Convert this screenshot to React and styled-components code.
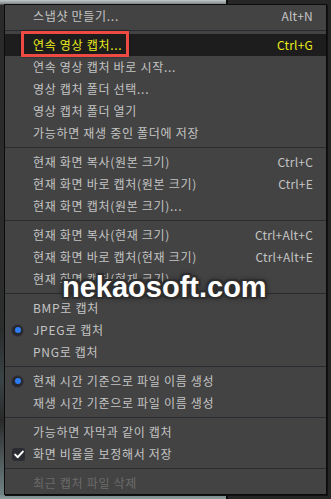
import React from "react";
import styled, { createGlobalStyle } from "styled-components";

const GlobalStyle = createGlobalStyle`
  html, body {
    margin: 0;
    padding: 0;
    width: 331px;
    height: 499px;
    overflow: hidden;
    background: #222;
  }
  body {
    font-family: "Noto Sans CJK KR", "Noto Sans", sans-serif;
  }
`;

const Desktop = styled.div`
  position: relative;
  display: grid;
  grid-template-columns: 226px 2px 1fr;
  width: 331px;
  height: 499px;
`;

const VideoPane = styled.div`
  background: linear-gradient(
    to bottom,
    #c3c9cb 0px,
    #7d8689 4px,
    #2a2a2a 5px,
    #2c2d2d 330px,
    #3a4446 380px,
    #2a2a2a 420px,
    #6f8283 494px,
    #8fa0a0 499px
  );
`;

const PaneDivider = styled.div`
  background: #0c0c0c;
`;

const SidePane = styled.div`
  background: #262626;
`;

const Menu = styled.div`
  position: absolute;
  left: 4px;
  top: 4px;
  width: 321px;
  border: 1px solid #0b0b0b;
  background: #434343;
  box-shadow: 1px 1px 0 #111;
  font-size: 12px;
  color: #c4c4c4;
`;

const Row = styled.div`
  display: grid;
  grid-template-columns: 24px 1fr auto;
  column-gap: 4px;
  align-items: center;
  height: 22px;
  line-height: 22px;
  padding-right: 13px;
  white-space: nowrap;
  background: ${(p) => (p.$highlight ? "#1d1d1d" : "transparent")};
  color: ${(p) => (p.$highlight ? "#ecec1a" : p.$disabled ? "#6b6b6b" : "#c4c4c4")};
`;

const Mark = styled.div`
  display: flex;
  align-items: center;
  justify-content: center;
  padding-left: 1px;
`;

const Label = styled.span`
  letter-spacing: 0.7px;
`;

const Shortcut = styled.span`
  text-align: right;
  letter-spacing: 0.2px;
`;

const Separator = styled.div`
  height: 7px;
  display: flex;
  align-items: center;

  &::after {
    content: "";
    display: block;
    width: 100%;
    height: 1px;
    background: #2a2a30;
  }
`;

const Radio = styled.span`
  display: flex;
  align-items: center;
  justify-content: center;
  width: 11px;
  height: 11px;
  border-radius: 50%;
  background: #27272d;
  box-shadow: 0 0 0 1px #3a3a40;

  &::after {
    content: "";
    width: 6px;
    height: 6px;
    border-radius: 50%;
    background: #2c7df4;
  }
`;

const CheckBox = styled.span`
  display: flex;
  align-items: center;
  justify-content: center;
  width: 13px;
  height: 13px;
  border-radius: 3px;
  background: #2b2b33;
  margin-left: 2px;
`;

const Annotation = styled.div`
  position: absolute;
  left: 21px;
  top: 31px;
  width: 102px;
  height: 20px;
  border: 3px solid #ec4a42;
  box-shadow: 0 0 2px rgba(0, 0, 0, 0.5);
`;

const Watermark = styled.div`
  position: absolute;
  left: 62px;
  top: 273px;
  font-family: "Liberation Sans", Arial, sans-serif;
  font-weight: 700;
  font-size: 29px;
  line-height: 29px;
  color: #fff;
  text-shadow: 2px 0 #2e2e2e, -2px 0 #2e2e2e, 0 2px #2e2e2e, 0 -2px #2e2e2e,
    2px 2px #2e2e2e, -2px -2px #2e2e2e, 2px -2px #2e2e2e, -2px 2px #2e2e2e,
    0 0 6px rgba(0, 0, 0, 0.85);
`;

const sections = [
  [{ label: "스냅샷 만들기...", shortcut: "Alt+N" }],
  [
    { label: "연속 영상 캡처...", shortcut: "Ctrl+G", highlight: true },
    { label: "연속 영상 캡처 바로 시작..." },
    { label: "영상 캡처 폴더 선택..." },
    { label: "영상 캡처 폴더 열기" },
    { label: "가능하면 재생 중인 폴더에 저장" },
  ],
  [
    { label: "현재 화면 복사(원본 크기)", shortcut: "Ctrl+C" },
    { label: "현재 화면 바로 캡처(원본 크기)", shortcut: "Ctrl+E" },
    { label: "현재 화면 캡처(원본 크기)..." },
  ],
  [
    { label: "현재 화면 복사(현재 크기)", shortcut: "Ctrl+Alt+C" },
    { label: "현재 화면 바로 캡처(현재 크기)", shortcut: "Ctrl+Alt+E" },
    { label: "현재 화면 캡처(현재 크기)..." },
  ],
  [
    { label: "BMP로 캡처" },
    { label: "JPEG로 캡처", mark: "radio" },
    { label: "PNG로 캡처" },
  ],
  [
    { label: "현재 시간 기준으로 파일 이름 생성", mark: "radio" },
    { label: "재생 시간 기준으로 파일 이름 생성" },
  ],
  [
    { label: "가능하면 자막과 같이 캡처" },
    { label: "화면 비율을 보정해서 저장", mark: "check" },
  ],
  [{ label: "최근 캡처 파일 삭제", disabled: true }],
];

const CheckIcon = () => (
  <svg width="10" height="9" viewBox="0 0 10 9">
    <polyline
      points="1.2,4.6 3.8,7.2 8.8,1.6"
      fill="none"
      stroke="#fff"
      strokeWidth="2"
      strokeLinecap="round"
      strokeLinejoin="round"
    />
  </svg>
);

const MenuItem = ({ item }) => (
  <Row $highlight={item.highlight} $disabled={item.disabled}>
    <Mark>
      {item.mark === "radio" && <Radio />}
      {item.mark === "check" && (
        <CheckBox>
          <CheckIcon />
        </CheckBox>
      )}
    </Mark>
    <Label>{item.label}</Label>
    <Shortcut>{item.shortcut}</Shortcut>
  </Row>
);

const App = () => {
  return (
    <>
      <GlobalStyle />
      <Desktop>
        <VideoPane />
        <PaneDivider />
        <SidePane />
        <Menu>
          {sections.map((section, i) => (
            <React.Fragment key={i}>
              {i > 0 && <Separator />}
              {section.map((item) => (
                <MenuItem key={item.label} item={item} />
              ))}
            </React.Fragment>
          ))}
        </Menu>
        <Annotation />
        <Watermark>nekaosoft.com</Watermark>
      </Desktop>
    </>
  );
};

export default App;
